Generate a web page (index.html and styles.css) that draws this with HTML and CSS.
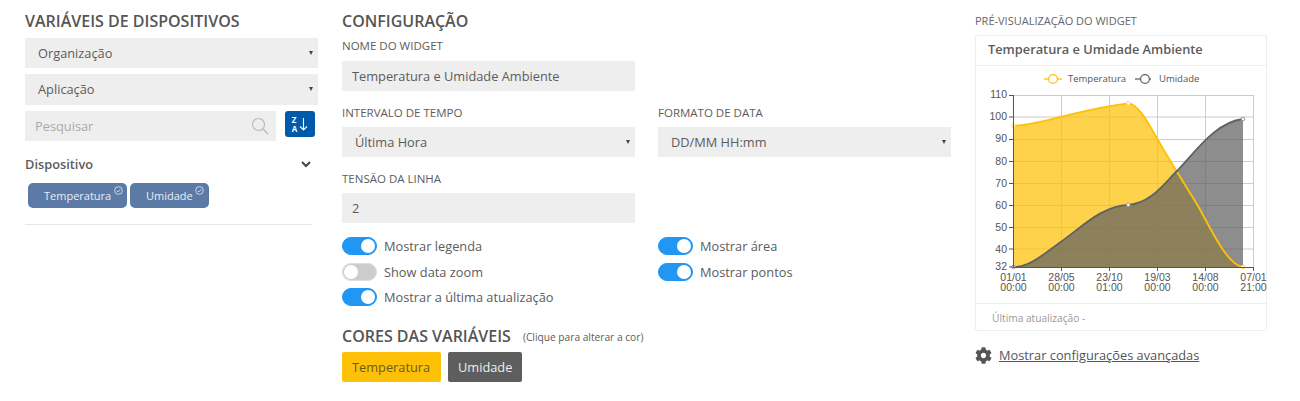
FILE: index.html
```html
<!DOCTYPE html>
<html lang="pt">
<head>
<meta charset="UTF-8" />
<meta name="viewport" content="width=device-width, initial-scale=1.0"/>
<title>Widget</title>
<link rel="stylesheet" href="styles.css">
</head>
<body>
<div class="page">

<div class="col-vars">
  <h2 class="title">VARIÁVEIS DE DISPOSITIVOS</h2>
  <div class="select select-side">Organização</div>
  <div class="select select-side">Aplicação</div>
  <div class="search-row">
    <div class="search">
      <span>Pesquisar</span>
      <svg class="search-icon" viewBox="0 0 18 18" width="18" height="18"><circle cx="7.5" cy="7.5" r="6" fill="none" stroke="#bbb" stroke-width="1.2"/><path d="M12 12l5 5" stroke="#bbb" stroke-width="1.6" fill="none"/></svg>
    </div>
    <div class="sort-btn">
      <div class="sort-letters"><span>Z</span><span>A</span></div>
      <svg viewBox="0 0 9 14" width="9" height="14"><path d="M4.5 1v12M1 9.5l3.5 3.5L8 9.5" stroke="#fff" stroke-width="1.1" fill="none"/></svg>
    </div>
  </div>
  <div class="device-head">
    <span>Dispositivo</span>
    <svg viewBox="0 0 10 7" width="10" height="7"><path d="M1 1l4 4 4-4" stroke="#444" stroke-width="2" fill="none"/></svg>
  </div>
  <div class="chips">
    <div class="chip chip-temp">Temperatura<svg class="chip-check" viewBox="0 0 10 10" width="9" height="9"><circle cx="5" cy="5" r="4.3" fill="none" stroke="#e4eaf2" stroke-width=".9"/><path d="M3 5.2l1.5 1.4L7 3.8" fill="none" stroke="#e4eaf2" stroke-width=".9"/></svg></div>
    <div class="chip chip-hum">Umidade<svg class="chip-check" viewBox="0 0 10 10" width="9" height="9"><circle cx="5" cy="5" r="4.3" fill="none" stroke="#e4eaf2" stroke-width=".9"/><path d="M3 5.2l1.5 1.4L7 3.8" fill="none" stroke="#e4eaf2" stroke-width=".9"/></svg></div>
  </div>
  <div class="rule"></div>
</div>

<div class="col-config">
  <h2 class="title">CONFIGURAÇÃO</h2>
  <div class="label label-first">NOME DO WIDGET</div>
  <div class="field half">Temperatura e Umidade Ambiente</div>
  <div class="two-cols">
    <div>
      <div class="label">INTERVALO DE TEMPO</div>
      <div class="select select-form">Última Hora</div>
    </div>
    <div>
      <div class="label">FORMATO DE DATA</div>
      <div class="select select-form">DD/MM HH:mm</div>
    </div>
  </div>
  <div class="label">TENSÃO DA LINHA</div>
  <div class="field half">2</div>
  <div class="two-cols toggles">
    <div class="toggle-list">
      <div class="toggle-row"><span class="toggle on"></span>Mostrar legenda</div>
      <div class="toggle-row"><span class="toggle"></span>Show data zoom</div>
      <div class="toggle-row"><span class="toggle on"></span>Mostrar a última atualização</div>
    </div>
    <div class="toggle-list">
      <div class="toggle-row"><span class="toggle on"></span>Mostrar área</div>
      <div class="toggle-row"><span class="toggle on"></span>Mostrar pontos</div>
    </div>
  </div>
  <div class="colors-head">
    <h2 class="title">CORES DAS VARIÁVEIS</h2>
    <small>(Clique para alterar a cor)</small>
  </div>
  <div class="color-btns">
    <div class="color-btn yellow">Temperatura</div>
    <div class="color-btn grey">Umidade</div>
  </div>
</div>

<div class="col-preview">
  <div class="preview-label">PRÉ-VISUALIZAÇÃO DO WIDGET</div>
  <div class="card">
    <div class="card-head">Temperatura e Umidade Ambiente</div>
    <div class="card-chart">
      <svg class="chart" viewBox="975 66 291 237" width="291" height="237">
        <!-- legend -->
        <path d="M1043 79h18" stroke="#ffc107" stroke-width="1.3"/>
        <circle cx="1052" cy="79" r="4.4" fill="#fff" stroke="#ffc107" stroke-width="1.2"/>
        <text class="legend" x="1067" y="82">Temperatura</text>
        <path d="M1134 79h16" stroke="#616161" stroke-width="1.3"/>
        <circle cx="1144" cy="79" r="4.4" fill="#fff" stroke="#616161" stroke-width="1.2"/>
        <text class="legend" x="1158" y="82">Umidade</text>
        <!-- grid -->
        <g class="grid">
          <path d="M1012.5 95.5h240M1012.5 117h240M1012.5 139.5h240M1012.5 161.5h240M1012.5 183.5h240M1012.5 205.5h240M1012.5 227.5h240M1012.5 249h240"/>
          <path d="M1060.5 95v172M1108.5 95v172M1156.5 95v172M1204.5 95v172M1252.5 95v172"/>
        </g>
        <!-- areas -->
        <path fill="#ffc107" fill-opacity=".72" d="M1012.5 125.7C1030 125 1045 120.5 1060 116.7C1080 112 1100 106.5 1127.3 103.3C1138 104 1148 125 1157 140C1170 163 1185 186 1197 206C1210 229 1226 265 1242 267H1012.5Z"/>
        <path fill="#616161" fill-opacity=".72" d="M1012.5 267C1030 267 1045 252 1060 241.7C1080 228 1100 206 1127.3 204.8C1150 204 1165 181 1177 170C1195 151 1215 122 1242 119V267H1012.5Z"/>
        <path fill="none" stroke="#ffc107" stroke-width="1.8" d="M1012.5 125.7C1030 125 1045 120.5 1060 116.7C1080 112 1100 106.5 1127.3 103.3C1138 104 1148 125 1157 140C1170 163 1185 186 1197 206C1210 229 1226 265 1242 267"/>
        <path fill="none" stroke="#616161" stroke-width="1.8" d="M1012.5 267C1030 267 1045 252 1060 241.7C1080 228 1100 206 1127.3 204.8C1150 204 1165 181 1177 170C1195 151 1215 122 1242 119"/>
        <!-- points -->
        <g fill="#fff" stroke="#ffd466" stroke-width="1">
          <circle cx="1012.5" cy="125.7" r="1.8"/><circle cx="1127.3" cy="103.3" r="1.8"/><circle cx="1242" cy="267" r="1.8"/>
        </g>
        <g fill="#fff" stroke="#999" stroke-width="1">
          <circle cx="1012.5" cy="267" r="1.8"/><circle cx="1127.3" cy="204.8" r="1.8"/><circle cx="1242" cy="119" r="1.8"/>
        </g>
        <!-- axes -->
        <path class="axis" d="M1012.5 95v172.5H1252.5M1008 95.5h4.5M1008 117h4.5M1008 139.5h4.5M1008 161.5h4.5M1008 183.5h4.5M1008 205.5h4.5M1008 227.5h4.5M1008 249h4.5M1008 267h4.5M1060.5 267v4M1108.5 267v4M1156.5 267v4M1204.5 267v4M1252.5 267v4"/>
        <g class="tick-y">
          <text x="1006" y="98">110</text><text x="1006" y="120">100</text><text x="1006" y="142">90</text><text x="1006" y="165">80</text><text x="1006" y="187">70</text><text x="1006" y="209">60</text><text x="1006" y="231">50</text><text x="1006" y="253">40</text><text x="1006" y="270">32</text>
        </g>
        <g class="tick-x">
          <text y="281"><tspan x="1012.5">01/01</tspan><tspan x="1012.5" dy="9.5">00:00</tspan></text>
          <text y="281"><tspan x="1060.5">28/05</tspan><tspan x="1060.5" dy="9.5">00:00</tspan></text>
          <text y="281"><tspan x="1108.5">23/10</tspan><tspan x="1108.5" dy="9.5">01:00</tspan></text>
          <text y="281"><tspan x="1156.5">19/03</tspan><tspan x="1156.5" dy="9.5">00:00</tspan></text>
          <text y="281"><tspan x="1204.5">14/08</tspan><tspan x="1204.5" dy="9.5">00:00</tspan></text>
          <text y="281"><tspan x="1252.5">07/01</tspan><tspan x="1252.5" dy="9.5">21:00</tspan></text>
        </g>
      </svg>
    </div>
    <div class="card-foot">Última atualização -</div>
  </div>
  <div class="advanced">
    <svg viewBox="0 0 512 512" width="17" height="17"><path fill="#555" d="M487.4 315.7l-42.6-24.6c4.3-23.2 4.3-47 0-70.2l42.6-24.6c4.9-2.8 7.1-8.6 5.5-14-11.1-35.6-30-67.8-54.7-94.6-3.8-4.1-10-5.1-14.8-2.3L380.8 110c-17.9-15.4-38.5-27.3-60.8-35.1V25.8c0-5.6-3.9-10.5-9.4-11.7-36.7-8.2-74.3-7.8-109.2 0-5.5 1.2-9.4 6.1-9.4 11.7V75c-22.2 7.9-42.8 19.8-60.8 35.1L88.7 85.5c-4.9-2.8-11-1.9-14.8 2.3-24.7 26.7-43.6 58.9-54.7 94.6-1.7 5.4.6 11.2 5.5 14L67.3 221c-4.3 23.2-4.3 47 0 70.2l-42.6 24.6c-4.9 2.8-7.1 8.6-5.5 14 11.1 35.6 30 67.8 54.7 94.6 3.8 4.1 10 5.1 14.8 2.3l42.6-24.6c17.9 15.4 38.5 27.3 60.8 35.1v49.2c0 5.6 3.9 10.5 9.4 11.7 36.7 8.2 74.3 7.8 109.2 0 5.5-1.2 9.4-6.1 9.4-11.7v-49.2c22.2-7.9 42.8-19.8 60.8-35.1l42.6 24.6c4.9 2.8 11 1.9 14.8-2.3 24.7-26.7 43.6-58.9 54.7-94.6 1.5-5.5-.7-11.3-5.6-14.1zM256 336c-44.1 0-80-35.9-80-80s35.9-80 80-80 80 35.9 80 80-35.9 80-80 80z"/></svg>
    <a href="#">Mostrar configurações avançadas</a>
  </div>
</div>

</div>
</body>
</html>
```

FILE: styles.css
```css
body {
  margin: 0;
  background-color: #fff;
  color: #5c5c5c;
  font-family: 'Open Sans', sans-serif;
  font-size: 12.8px;
}
.page {
  display: flex;
  gap: 24px;
  padding: 12px 0 0 25px;
}
.col-vars {
  width: 293px;
}
.col-config {
  width: 609px;
}
.col-preview {
  width: 292px;
}
.title {
  margin: -1px 0 0;
  padding-bottom: 1px;
  font-size: 16px;
  line-height: 20px;
  font-weight: 600;
  color: #555;
}

/* form bits */
.select,
.field {
  position: relative;
  height: 30px;
  line-height: 30px;
  background-color: #eee;
  box-sizing: border-box;
}
.select::after {
  content: '';
  position: absolute;
  right: 5px;
  top: 13px;
  border-left: 2.5px solid transparent;
  border-right: 2.5px solid transparent;
  border-top: 4px solid #444;
}
.select-side {
  padding-left: 13px;
  margin-top: 6px;
}
.select-side + .select-side {
  height: 31px;
}
.select-form {
  padding-left: 13px;
}
.field {
  padding-left: 10px;
}
.half {
  width: 293px;
}
.label {
  margin-top: 14px;
  margin-bottom: 6px;
  height: 16px;
  line-height: 16px;
  font-size: 11.5px;
  color: #5c5c5c;
}
.label-first {
  margin-top: 6px;
  margin-bottom: 7px;
}
.two-cols {
  display: grid;
  grid-template-columns: 293px 293px;
  gap: 23px;
}

/* left column */
.search-row {
  display: flex;
  align-items: flex-start;
  gap: 9px;
  margin-top: 6px;
}
.search {
  display: flex;
  justify-content: space-between;
  align-items: center;
  width: 251px;
  height: 30px;
  box-sizing: border-box;
  padding: 0 7px 0 10px;
  background-color: #eee;
  color: #aaa;
}
.sort-btn {
  display: flex;
  align-items: center;
  justify-content: center;
  gap: 2px;
  width: 30px;
  height: 26px;
  background-color: #0059a9;
  border-radius: 3px;
}
.sort-letters {
  display: flex;
  flex-direction: column;
  color: #fff;
  font-size: 8px;
  line-height: 9px;
  font-weight: 700;
}
.device-head {
  display: flex;
  justify-content: space-between;
  align-items: center;
  margin-top: 13px;
  padding-right: 7px;
  height: 20px;
  font-weight: 600;
}
.chips {
  display: flex;
  gap: 3px;
  margin-top: 9px;
  padding-left: 3px;
}
.chip {
  position: relative;
  box-sizing: border-box;
  height: 25px;
  line-height: 26px;
  background-color: #5b7ba6;
  border-radius: 5px;
  color: #e8edf4;
  font-size: 11px;
}
.chip-temp {
  width: 99px;
  padding-left: 16px;
}
.chip-hum {
  width: 79px;
  padding-left: 16px;
}
.chip-check {
  position: absolute;
  top: 3px;
  right: 4px;
}
.chip-hum .chip-check {
  right: 5px;
}
.rule {
  width: 287px;
  height: 1px;
  margin-top: 16px;
  background-color: #e6e6e6;
}

/* switches */
.toggles {
  margin-top: 14px;
}
.toggle-row {
  display: flex;
  align-items: center;
  gap: 7px;
  height: 18px;
  margin-bottom: 7.5px;
}
.toggle {
  position: relative;
  display: block;
  width: 35px;
  height: 18px;
  box-sizing: border-box;
  border-radius: 9px;
  background-color: #ccc;
  border: 1px solid #ddd;
}
.toggle::after {
  content: '';
  position: absolute;
  left: 1px;
  top: 1px;
  width: 14px;
  height: 14px;
  border-radius: 50%;
  background-color: #fff;
}
.toggle.on {
  background-color: #2196f3;
  border-color: #2196f3;
}
.toggle.on::after {
  left: 18px;
}

/* variable colours */
.colors-head {
  display: flex;
  align-items: center;
  gap: 12px;
  margin-top: 12px;
}
.colors-head .title {
  margin: 0;
  padding: 0;
}
.colors-head small {
  font-size: 10.2px;
  padding-top: 2px;
}
.color-btns {
  display: flex;
  gap: 7px;
  margin-top: 6px;
}
.color-btn {
  height: 30px;
  line-height: 30px;
  padding: 0 10px;
  border-radius: 2px;
}
.yellow {
  width: 99px;
  box-sizing: border-box;
  background-color: #ffc107;
  color: #6b5a1e;
}
.grey {
  background-color: #5e5e5e;
  color: #eee;
}

/* preview */
.preview-label {
  height: 23px;
  line-height: 17px;
  padding-top: 0;
  font-size: 11px;
  color: #666;
}
.card {
  width: 292px;
  height: 296px;
  box-sizing: border-box;
  border: 1px solid #eee;
  border-radius: 2px;
}
.card-head {
  height: 29px;
  line-height: 27px;
  padding-left: 12px;
  border-bottom: 1px solid #eee;
  font-size: 12.8px;
  font-weight: 600;
}
.card-chart {
  height: 237px;
}
.chart {
  display: block;
}
.legend {
  font-family: 'Open Sans', sans-serif;
  font-size: 9.5px;
  fill: #555;
}
.grid path {
  fill: none;
  stroke: #ccc;
  stroke-width: 1;
}
.axis {
  fill: none;
  stroke: #555;
  stroke-width: 1;
}
.tick-y text {
  font-family: 'Liberation Sans', sans-serif;
  font-size: 10.5px;
  fill: #555;
  text-anchor: end;
}
.tick-x text {
  font-family: 'Liberation Sans', sans-serif;
  font-size: 10.5px;
  fill: #555;
  text-anchor: middle;
}
.card-foot {
  height: 27px;
  line-height: 28px;
  padding-left: 16px;
  border-top: 1px solid #eee;
  font-size: 10.2px;
  color: #999;
}
.advanced {
  display: flex;
  align-items: center;
  gap: 7px;
  margin-top: 15px;
}
.advanced a {
  color: #555;
}
```
